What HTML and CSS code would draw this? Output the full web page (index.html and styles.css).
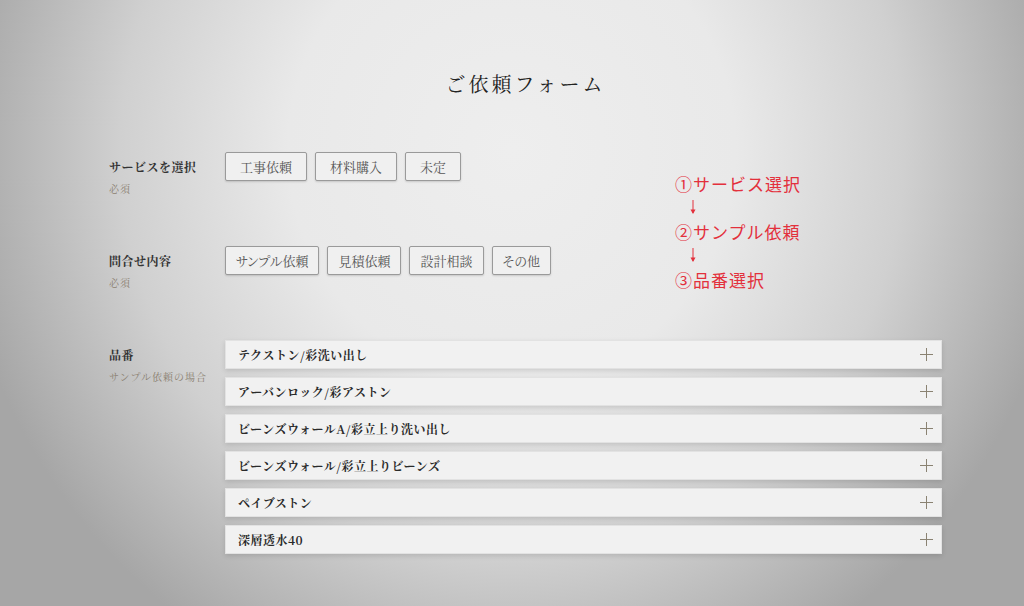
FILE: index.html
```html
<!DOCTYPE html>
<html lang="ja">
<head>
    <meta charset="UTF-8">
    <meta name="viewport" content="width=device-width, initial-scale=1"/>
    <title>ご依頼フォーム</title>
    <link rel="stylesheet" href="styles.css">
</head>
<body class="body">
<main class="page">
    <h1 class="title">ご依頼フォーム</h1>

    <div class="top">
        <div class="fields">
            <div class="row">
                <div class="label">
                    <p class="name">サービスを選択</p>
                    <p class="sub">必須</p>
                </div>
                <div class="choices">
                    <span class="btn">工事依頼</span>
                    <span class="btn">材料購入</span>
                    <span class="btn">未定</span>
                </div>
            </div>
            <div class="row">
                <div class="label">
                    <p class="name">問合せ内容</p>
                    <p class="sub">必須</p>
                </div>
                <div class="choices narrow">
                    <span class="btn">サンプル依頼</span>
                    <span class="btn">見積依頼</span>
                    <span class="btn">設計相談</span>
                    <span class="btn">その他</span>
                </div>
            </div>
        </div>
        <div class="note">
            <p>①サービス選択</p>
            <p class="arrow"><svg width="8" height="16" viewBox="0 0 8 16"><path d="M4 1V14" stroke="#e3303c" stroke-width="1"/><path d="M1.5 10.5L4 15L6.5 10.5Z" fill="#e3303c"/></svg></p>
            <p>②サンプル依頼</p>
            <p class="arrow"><svg width="8" height="16" viewBox="0 0 8 16"><path d="M4 1V14" stroke="#e3303c" stroke-width="1"/><path d="M1.5 10.5L4 15L6.5 10.5Z" fill="#e3303c"/></svg></p>
            <p>③品番選択</p>
        </div>
    </div>

    <div class="row products">
        <div class="label">
            <p class="name">品番</p>
            <p class="sub">サンプル依頼の場合</p>
        </div>
        <div class="list">
            <div class="item"><span>テクストン/彩洗い出し</span><i class="plus"></i></div>
            <div class="item"><span>アーバンロック/彩アストン</span><i class="plus"></i></div>
            <div class="item"><span>ビーンズウォールA/彩立上り洗い出し</span><i class="plus"></i></div>
            <div class="item"><span>ビーンズウォール/彩立上りビーンズ</span><i class="plus"></i></div>
            <div class="item"><span>ペイブストン</span><i class="plus"></i></div>
            <div class="item"><span>深層透水40</span><i class="plus"></i></div>
        </div>
    </div>
</main>
</body>
</html>
```

FILE: styles.css
```css
html{
    height:100%;
}
.body{
    margin:0px;
    min-height:606px;
    background: radial-gradient(ellipse 560px 580px at 512px 150px, #eeeeee 0%, #e9e9e9 40%, #d0d0d0 70%, #a6a6a6 100%) #a6a6a6;
    font-family: "Noto Serif CJK JP", "Noto Sans CJK JP", serif;
    color:#333;
}
p{
    margin:0;
}
.page{
    padding: 66px 82px 40px 109px;
}
.title{
    margin:0 0 50px 0;
    text-align:center;
    font-size:20px;
    font-weight:normal;
    letter-spacing:3px;
    line-height:36px;
    color:#222;
}

.top{
    display:flex;
}
.fields{
    flex:1;
}
.row{
    display:grid;
    grid-template-columns:116px 1fr;
    margin-bottom:49px;
}
.label .name{
    font-size:12px; font-weight:bold; letter-spacing:0.5px;
    line-height:29px; color:#333;
}
.label .sub{
    font-size:10px; line-height:16px; color:#8a8070; letter-spacing:1px;
}
.choices{
    display:flex; gap:8px; align-items:flex-start;
}
.btn{
    display:block;
    height:27px; line-height:27px;
    padding:0 14px;
    font-size:13px; color:#555;
    background:#f0f0f0;
    border:1px solid #9a9a9a;
    border-radius:2px;
    box-shadow:0 1px 2px rgba(0,0,0,.15);
}
.narrow .btn{
    padding:0 10px;
    font-feature-settings:"palt";
}

.note{
    width:267px;
    margin-top:20px;
    color:#e3303c;
    font-family:"Noto Sans CJK JP", sans-serif;
    font-size:17px;
    letter-spacing:1px;
}
.note p{
    line-height:24px; height:24px;
}
.note .arrow{
    padding:3px 0 0 14px;
    height:21px;
}
.note svg{
    display:block;
}

.products{
    margin-bottom:0;
}
.list{
    display:flex; flex-direction:column; gap:8px;
}
.item{
    display:flex; justify-content:space-between; align-items:center;
    height:27px;
    padding:0 8px 0 12px;
    background:#f1f1f1;
    border:1px solid #e2e2e2;
    box-shadow:0 2px 5px rgba(0,0,0,.12);
    font-size:12px; font-weight:bold; letter-spacing:0.5px; color:#2a2a2a;
}
.plus{
    position:relative;
    width:13px; height:13px;
}
.plus:before, .plus:after{
    content:""; position:absolute; background:#8a8272;
}
.plus:before{
    left:0; top:6px; width:13px; height:1px;
}
.plus:after{
    left:6px; top:0; width:1px; height:13px;
}
```
